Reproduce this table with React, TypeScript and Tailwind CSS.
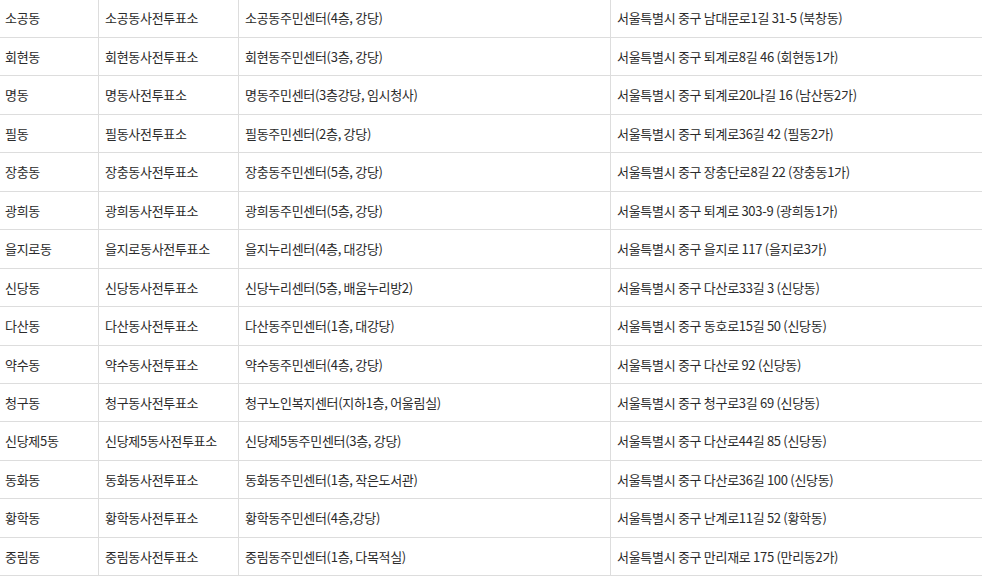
const rows = [
  ["소공동", "소공동사전투표소", "소공동주민센터(4층, 강당)", "서울특별시 중구 남대문로1길 31-5 (북창동)"],
  ["회현동", "회현동사전투표소", "회현동주민센터(3층, 강당)", "서울특별시 중구 퇴계로8길 46 (회현동1가)"],
  ["명동", "명동사전투표소", "명동주민센터(3층강당, 임시청사)", "서울특별시 중구 퇴계로20나길 16 (남산동2가)"],
  ["필동", "필동사전투표소", "필동주민센터(2층, 강당)", "서울특별시 중구 퇴계로36길 42 (필동2가)"],
  ["장충동", "장충동사전투표소", "장충동주민센터(5층, 강당)", "서울특별시 중구 장충단로8길 22 (장충동1가)"],
  ["광희동", "광희동사전투표소", "광희동주민센터(5층, 강당)", "서울특별시 중구 퇴계로 303-9 (광희동1가)"],
  ["을지로동", "을지로동사전투표소", "을지누리센터(4층, 대강당)", "서울특별시 중구 을지로 117 (을지로3가)"],
  ["신당동", "신당동사전투표소", "신당누리센터(5층, 배움누리방2)", "서울특별시 중구 다산로33길 3 (신당동)"],
  ["다산동", "다산동사전투표소", "다산동주민센터(1층, 대강당)", "서울특별시 중구 동호로15길 50 (신당동)"],
  ["약수동", "약수동사전투표소", "약수동주민센터(4층, 강당)", "서울특별시 중구 다산로 92 (신당동)"],
  ["청구동", "청구동사전투표소", "청구노인복지센터(지하1층, 어울림실)", "서울특별시 중구 청구로3길 69 (신당동)"],
  ["신당제5동", "신당제5동사전투표소", "신당제5동주민센터(3층, 강당)", "서울특별시 중구 다산로44길 85 (신당동)"],
  ["동화동", "동화동사전투표소", "동화동주민센터(1층, 작은도서관)", "서울특별시 중구 다산로36길 100 (신당동)"],
  ["황학동", "황학동사전투표소", "황학동주민센터(4층,강당)", "서울특별시 중구 난계로11길 52 (황학동)"],
  ["중림동", "중림동사전투표소", "중림동주민센터(1층, 다목적실)", "서울특별시 중구 만리재로 175 (만리동2가)"],
];

export default function App() {
  return (
    <div
      className="w-[982px] h-[576px] overflow-hidden bg-white text-[13px] tracking-[-0.3px] text-[#2b2b2b]"
      style={{ fontFamily: '"Noto Sans CJK KR", "Noto Sans", sans-serif' }}
    >
      <div className="-mt-[0.5px]">
        {rows.map((r, i) => (
          <div
            key={i}
            className="grid grid-cols-[99px_140px_372px_1fr] h-[38.46px] border-b border-[#dddddd]"
          >
            <div className="flex items-center pl-[5px] border-r border-[#dddddd] whitespace-nowrap">{r[0]}</div>
            <div className="flex items-center pl-[6px] border-r border-[#dddddd] whitespace-nowrap">{r[1]}</div>
            <div className="flex items-center pl-[6px] border-r border-[#dddddd] whitespace-nowrap">{r[2]}</div>
            <div className="flex items-center pl-[6px] whitespace-nowrap">{r[3]}</div>
          </div>
        ))}
      </div>
    </div>
  );
}
